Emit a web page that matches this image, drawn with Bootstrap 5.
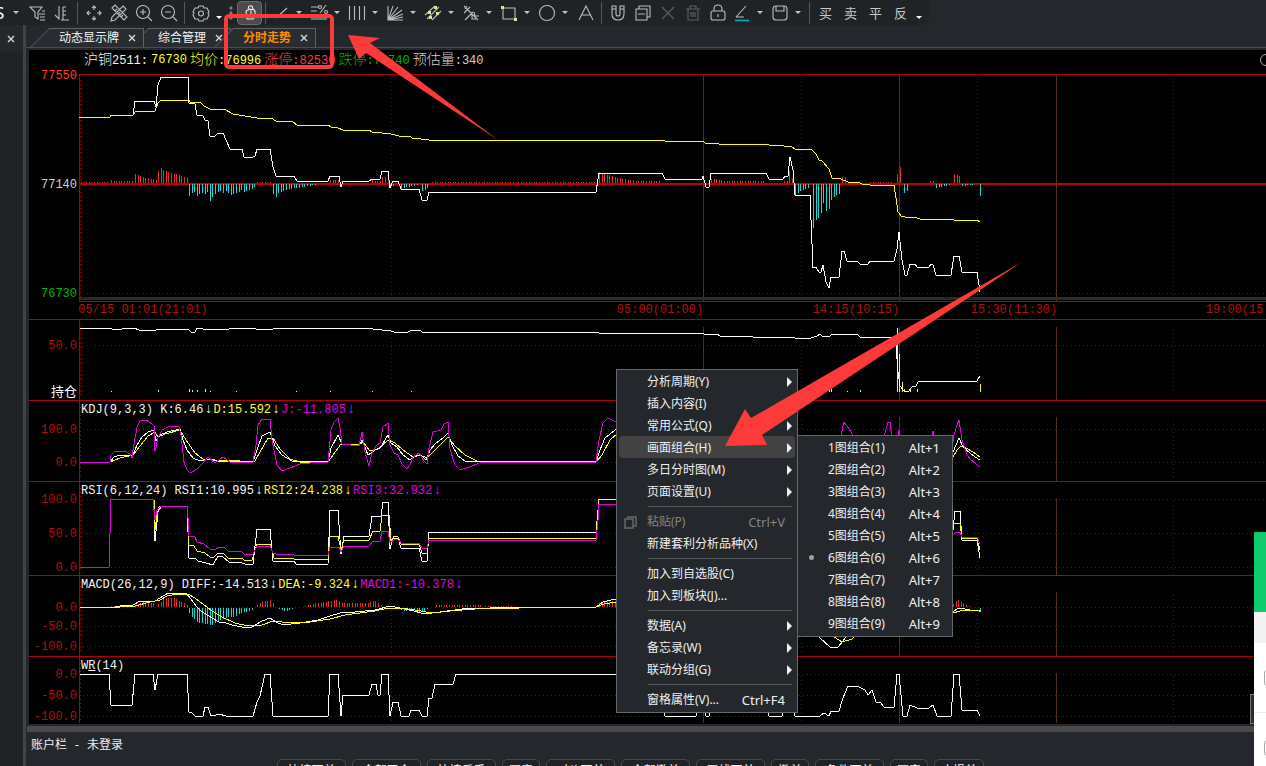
<!DOCTYPE html>
<html lang="zh-CN">
<head>
<meta charset="utf-8">
<meta name="viewport" content="width=device-width, initial-scale=1">
<title>分时走势</title>
<link rel="stylesheet" href="https://cdn.jsdelivr.net/npm/bootstrap@5.3.0/dist/css/bootstrap.min.css">
<style>
:root{--panel:#24272c;--deep:#1f2326;--line:#4a4d50;--up:#b00000;--mark:#fc3a3a}
body{background:var(--panel);color:#f0f0f0;font:12px/16px "Noto Sans","Noto Sans CJK SC",sans-serif}
button{background:none;border:0;padding:0;color:inherit;font:inherit}
/* toolbar */
.toolbar{height:25px;background:var(--deep);border-radius:0 0 6px 0;color:#c8c8c8;width:max-content;padding-right:4px}
.toolbar svg{width:20px;height:20px;fill:none;stroke:#bcbcbc;stroke-width:1.1}
.tool{width:25px;height:24px;display:flex;align-items:center;justify-content:center;flex:none}
.tool.drop{width:38px;justify-content:flex-start;padding-left:2px}
.tool.drop::after,.tool.tip::after{content:"";border:3px solid transparent;border-top-color:#c4c4c4;border-bottom:0;margin-left:5px}
.tool.tip{width:12px}
.tool.tip::after{margin:10px 0 0;border-top-color:#fff}
.tool.held{background:#4b4b4b;border:1px solid #6b6b6b;border-radius:4px}
.tool.off svg{stroke:#5d6063}
.tool.cut{width:24px;justify-content:flex-start;font-size:17px;overflow:hidden;color:#fff}
.tool.cut::before{content:"";order:2;border:3px solid transparent;border-top-color:#c4c4c4;border-bottom:0;margin-left:9px}
.tool.cut span{margin-left:-5px}
.trade{font-size:13px}
.divide{width:7px;height:22px;flex:none;background:linear-gradient(#55585a,#55585a) center/1px 100% no-repeat}
.grip{width:12px;height:16px;flex:none;background:radial-gradient(circle,#888 1px,transparent 2px) center/4px 5px repeat-y}
/* side panel and tabs */
.side{width:23px;flex:none}
.side-head{height:27px}
.side-body{background:var(--deep)}
.split-v{width:3px;flex:none;background:#434343}
.tabs{height:23px;padding:3px 0 0 24px;border-bottom:1px solid var(--line);margin-bottom:2px}
.tab-item{position:relative;background:#292c31;border:1px solid #606366;border-width:1px 1px 0 0;padding:0 4px 0 9px;gap:6px;height:19px}
.tab-item::before{content:"";position:absolute;left:-10px;top:-1px;bottom:0;width:22px;background:inherit;border:1px solid #606366;border-width:1px 0 0 1px;transform:skewX(-45deg);z-index:0}
.tab-item>*{position:relative;z-index:1}
.tab-item:nth-child(2){margin-left:5px}
.tab-item:nth-child(3){margin-left:3px;z-index:3}
.tab-item:nth-child(1){z-index:3}
.tab-item a{color:#f4f4f4;text-decoration:none}
.tab-item.on a{color:#ff8c00;font-weight:700}
.x-btn{width:14px;height:14px;display:flex;align-items:center;justify-content:center}
.x-btn svg{width:8px;height:8px;stroke:#d8d8d8;stroke-width:1.4}
/* chart panes */
.charts{background:#000;margin-left:3px;font-family:"Liberation Mono","Noto Sans CJK SC",monospace}
.pane{position:relative;min-height:0}
.pane+.pane{border-top:1px solid var(--up)}
.pane svg.plot{display:block;position:absolute;inset:0;width:100%;height:100%}
.plot text{font-size:12px;fill:#b01010}
.pane-head{position:absolute;top:1px;left:52px;white-space:pre}
.pane-head.quote{left:55px;top:2px;gap:3px}
.zh{font-size:14px;font-weight:300}
.arr{display:inline-block;width:10px;text-align:center;font-size:14px;line-height:14px}
.yl{color:#ffff28}.mg{color:#e000e0}.rd{color:#ff3c3c}.gn{color:#00b400}.wh{color:#f4f4f4}.gy{color:#d0d0d0}
/* account bar */
.split-h{height:6px;margin:2px 0 0 1px;background:#4a4848}
.account{height:34px;padding:5px 5px 0;overflow:hidden}
.acct-btn{border:1px solid #46494c;border-radius:5px;background:var(--deep);height:24px;padding:1px 6px}
.acct-btn.four{width:69px}
.acct-row{margin:6px 0 0 246px;gap:6px}
/* menus */
.ctx{position:absolute;background:var(--panel);border:1px solid #66696b;z-index:10}
.ctx-main{left:616px;top:369px;width:182px;padding:0 2px 2px}
.ctx-sub{left:797px;top:435px;width:156px;padding:0 2px 2px}
.ctx button{display:flex;align-items:center;width:100%;height:22px;padding:1px 10px 0 28px;white-space:nowrap;position:relative;border-radius:4px;text-align:left}
.ctx kbd{margin-left:auto;background:none;color:inherit;padding:0;font:13px/16px "Noto Sans",sans-serif}
.ctx .more::after{content:"";position:absolute;right:3px;border:5px solid transparent;border-left-color:#f0f0f0;border-right:0}
.ctx .hot{background:#424242}
.ctx button:disabled{color:#858585}
.ctx hr{margin:4px 3px 3px 29px;border-top:1px solid #55585a;opacity:1}
.ctx button>svg{position:absolute;left:4px;width:14px;height:14px;stroke:#64676a;fill:none}
.ctx .dot::before{content:"";position:absolute;left:9px;width:5px;height:5px;border-radius:50%;background:#a0a0a0}
/* floating window at the right edge */
.float{position:absolute;right:0;top:532px;bottom:0;width:12px;background:#fff;overflow:hidden;z-index:5}
.float-top{height:80px;background:#10cc6e}
.float-sub{height:31px;background:#f3f3f3}
.float-cell{height:70px;border-bottom:1px solid #eee;padding:27px 0 0 10px}
.float-cell span{display:block;width:16px;height:16px;border:1px solid #aaa;border-radius:3px}
.shade{position:absolute;right:12px;top:694px;width:4px;height:30px;background:#2c2c2c;border:1px solid #777;border-right:0}
.marks{position:absolute;left:0;top:0;width:100%;height:100%;pointer-events:none;z-index:20}
</style>
</head>
<body class="vh-100 overflow-hidden position-relative d-flex flex-column">

<header class="toolbar d-flex align-items-center">
  <button class="tool cut" aria-label="字号"><span>S</span></button>
  <button class="tool" aria-label="筛选"><svg viewBox="0 0 20 20"><path d="M3 4h12L11 9v7L8 14V9zM12 11h6M13 14h5M13 17h5M15 8h3"/></svg></button>
  <button class="tool" aria-label="排序"><svg viewBox="0 0 20 20"><path d="M7 3v13L3 12M11 17V4M11 4h3M11 8h3M11 12h3M9 17h8"/></svg></button>
  <span class="divide"></span>
  <button class="tool" aria-label="移动"><svg viewBox="0 0 20 20"><path d="M10 3v4M10 13v4M3 10h4M13 10h4M8 5l2-2 2 2M8 15l2 2 2-2M5 8l-2 2 2 2M15 8l2 2-2 2"/></svg></button>
  <button class="tool" aria-label="画线工具"><svg viewBox="0 0 20 20"><path d="M3 5l3-3 12 12-3 3zM14 3l3 3L6 17l-4 1 1-4zM6 8l2-2M9 11l2-2M12 14l2-2"/></svg></button>
  <button class="tool" aria-label="放大"><svg viewBox="0 0 20 20"><circle cx="9" cy="9" r="6.5"/><path d="M14 14l4 4M6 9h6M9 6v6"/></svg></button>
  <button class="tool" aria-label="缩小"><svg viewBox="0 0 20 20"><circle cx="9" cy="9" r="6.5"/><path d="M14 14l4 4M6 9h6"/></svg></button>
  <span class="divide"></span>
  <button class="tool" aria-label="设置"><svg viewBox="0 0 20 20"><path d="M8 3h4l1 2 3 0 2 4-1 1 1 2-2 4-3 0-1 2H8l-1-2-3 0-2-4 1-2-1-1 2-4 3 0z"/><circle cx="10" cy="10.500" r="2.500"/></svg></button>
  <button class="tool tip" aria-label="更多"></button>
  <span class="grip"></span>
  <button class="tool held" aria-label="光标"><svg viewBox="0 0 20 20" style="stroke:#eee"><path d="M6 8l1 8h6l2-3V8l-2-2-2 1-1-1-2 1zM8 6l1-3 3 0 1 3M11 8v3"/></svg></button>
  <span class="divide"></span>
  <button class="tool drop" aria-label="直线"><svg viewBox="0 0 20 20"><path d="M5 15L16 5"/></svg></button>
  <button class="tool drop" aria-label="百分比线"><svg viewBox="0 0 20 20"><path d="M2 4h7M2 8h6M2 12h16M2 16h16M17 2l-6 8"/><circle cx="11" cy="4" r="1.500"/><circle cx="17" cy="9" r="1.500"/></svg></button>
  <button class="tool drop" aria-label="周期线"><svg viewBox="0 0 20 20"><path d="M2.500 3v14M7.500 3v14M12.500 3v14M17.500 3v14"/></svg></button>
  <button class="tool drop" aria-label="扇形线"><svg viewBox="0 0 20 20"><path d="M3 3v14h15M3 17L8 3M3 17L13 4M3 17L17 7M3 17l15-6M3 17l15-3"/></svg></button>
  <button class="tool drop" aria-label="平行线"><svg viewBox="0 0 20 20"><path d="M2 12L12 3M4 16L16 4M9 17l9-9"/><path d="M5 8h3v3H5zM11 3h3v3h-3zM6 13h3v3H6zM13 9h3v3h-3z" fill="#e2e2a0" stroke="none"/></svg></button>
  <button class="tool drop" aria-label="音叉线"><svg viewBox="0 0 20 20"><path d="M3 3l14 14M3 10l6-6M4 17l8-8M6 3L4 6M11 12v4h4M13 9l1 4 4 0"/></svg></button>
  <button class="tool drop" aria-label="矩形"><svg viewBox="0 0 20 20"><path d="M4 5h12v11H4z"/><path d="M2 3h3v3H2zM15 15h3v3h-3z" fill="#e2e2a0" stroke="none"/></svg></button>
  <button class="tool drop" aria-label="圆形"><svg viewBox="0 0 20 20"><circle cx="10" cy="10" r="7.500"/></svg></button>
  <button class="tool" aria-label="文字"><svg viewBox="0 0 20 20"><path d="M3 17L10 3l7 14M6 12h8"/></svg></button>
  <span class="divide"></span>
  <button class="tool" aria-label="磁铁"><svg viewBox="0 0 20 20"><path d="M4 3h4v8q0 2 2 2t2-2V3h4v8q0 6-6 6t-6-6zM4 6h4M12 6h4"/></svg></button>
  <button class="tool" aria-label="复制"><svg viewBox="0 0 20 20"><path d="M3 6h11v11H3zM6 6V3h11v11h-3M5 11h7"/></svg></button>
  <button class="tool off" aria-label="关闭"><svg viewBox="0 0 20 20"><path d="M4 4l12 12M16 4L4 16"/></svg></button>
  <button class="tool off" aria-label="删除"><svg viewBox="0 0 20 20"><path d="M3 6h14M7 6V3h6v3M5 6v11h10V6M8 9v5M10 9v5M12 9v5"/></svg></button>
  <button class="tool" aria-label="锁定"><svg viewBox="0 0 20 20"><rect x="3" y="8" width="14" height="9" rx="2"/><path d="M6 8V6q0-4 4-4t4 4v2M10 11v3"/></svg></button>
  <button class="tool drop" aria-label="颜色"><svg viewBox="0 0 20 20"><path d="M4 14L14 3M4 14h8"/><path d="M3 17.500h14" stroke="#18a8c0" stroke-width="1.600"/></svg></button>
  <button class="tool drop" aria-label="保存"><svg viewBox="0 0 20 20"><rect x="3" y="3" width="14" height="14" rx="3"/><path d="M6 3v5h8V3"/></svg></button>
  <span class="divide"></span>
  <button class="tool trade">买</button><button class="tool trade">卖</button><button class="tool trade">平</button><button class="tool trade">反</button>
  <button class="tool tip" aria-label="更多"></button>
</header>

<div class="d-flex flex-fill" style="min-height:0">
  <aside class="side d-flex flex-column">
    <div class="side-head d-flex align-items-center ps-1"><button class="x-btn" aria-label="关闭"><svg viewBox="0 0 8 8"><path d="M1 1l6 6M7 1L1 7"/></svg></button></div>
    <div class="side-body flex-fill"></div>
  </aside>
  <div class="split-v"></div>
  <main class="d-flex flex-column flex-fill overflow-hidden">
    <nav class="tabs d-flex">
      <div class="tab-item d-flex align-items-center"><a href="#">动态显示牌</a><button class="x-btn" aria-label="关闭"><svg viewBox="0 0 8 8"><path d="M1 1l6 6M7 1L1 7"/></svg></button></div>
      <div class="tab-item d-flex align-items-center"><a href="#">综合管理</a><button class="x-btn" aria-label="关闭"><svg viewBox="0 0 8 8"><path d="M1 1l6 6M7 1L1 7"/></svg></button></div>
      <div class="tab-item on d-flex align-items-center"><a href="#">分时走势</a><button class="x-btn" aria-label="关闭"><svg viewBox="0 0 8 8"><path d="M1 1l6 6M7 1L1 7"/></svg></button></div>
    </nav>
    <div class="charts d-flex flex-column flex-fill overflow-hidden">
      <section class="pane" id="price"><svg class="plot"></svg>
        <div class="pane-head quote d-flex"><span class="wh"><span class="zh">沪铜</span>2511:</span><span class="yl">76730</span><span class="yl"><span class="zh">均价</span>:76996</span><span class="rd"><span class="zh">涨停</span>:82530</span><span class="gn"><span class="zh">跌停</span>:70740</span><span class="gy"><span class="zh">预估量</span>:340</span></div>
      </section>
      <section class="pane" id="hold"><svg class="plot"></svg></section>
      <section class="pane" id="kdj"><svg class="plot"></svg>
        <div class="pane-head"><span class="wh">KDJ(9,3,3) K:6.46<span class="arr">↓</span></span><span class="yl">D:15.592<span class="arr">↓</span></span><span class="mg">J:-11.805<span class="arr">↓</span></span></div></section>
      <section class="pane" id="rsi"><svg class="plot"></svg>
        <div class="pane-head"><span class="wh">RSI(6,12,24) RSI1:10.995<span class="arr">↓</span></span><span class="yl">RSI2:24.238<span class="arr">↓</span></span><span class="mg">RSI3:32.932<span class="arr">↓</span></span></div></section>
      <section class="pane" id="macd"><svg class="plot"></svg>
        <div class="pane-head"><span class="wh">MACD(26,12,9) DIFF:-14.513<span class="arr">↓</span></span><span class="yl">DEA:-9.324<span class="arr">↓</span></span><span class="mg">MACD1:-10.378<span class="arr">↓</span></span></div></section>
      <section class="pane" id="wr"><svg class="plot"></svg>
        <div class="pane-head wh">W<u>R</u>(14)</div></section>
    </div>
    <div class="split-h"></div>
    <footer class="account">
      <div class="d-flex gap-2"><span>账户栏</span><span>-</span><span>未登录</span></div>
      <div class="acct-row d-flex">
        <button class="acct-btn four">快捷下单</button><button class="acct-btn four">全部平仓</button><button class="acct-btn four">快捷反手</button><button class="acct-btn">图表</button><button class="acct-btn four">对价下单</button><button class="acct-btn four">全部撤单</button><button class="acct-btn four">画线下单</button><button class="acct-btn">撤单</button><button class="acct-btn four">条件下单</button><button class="acct-btn">图表</button><button class="acct-btn">止损单</button>
      </div>
    </footer>
  </main>
</div>

<div class="ctx ctx-main">
  <button class="more">分析周期(Y)</button><button>插入内容(I)</button><button class="more">常用公式(Q)</button><button class="more hot">画面组合(H)</button><button class="more">多日分时图(M)</button><button class="more">页面设置(U)</button>
  <hr>
  <button disabled><svg viewBox="0 0 14 14" stroke-width="1.500"><path d="M2 4h8v9H2zM5 4V2h8v9h-3"/></svg>粘贴(P)<kbd>Ctrl+V</kbd></button><button>新建套利分析品种(X)</button>
  <hr>
  <button>加入到自选股(C)</button><button>加入到板块(J)...</button>
  <hr>
  <button class="more">数据(A)</button><button class="more">备忘录(W)</button><button class="more">联动分组(G)</button>
  <hr>
  <button>窗格属性(V)...<kbd>Ctrl+F4</kbd></button>
</div>
<div class="ctx ctx-sub">
  <button>1图组合(1)<kbd>Alt+1</kbd></button><button>2图组合(2)<kbd>Alt+2</kbd></button><button>3图组合(3)<kbd>Alt+3</kbd></button><button>4图组合(4)<kbd>Alt+4</kbd></button><button>5图组合(5)<kbd>Alt+5</kbd></button><button class="dot">6图组合(6)<kbd>Alt+6</kbd></button><button>7图组合(7)<kbd>Alt+7</kbd></button><button>8图组合(8)<kbd>Alt+8</kbd></button><button>9图组合(9)<kbd>Alt+9</kbd></button>
</div>

<div class="shade"></div>
<div class="float"><div class="float-top"></div><div class="float-sub"></div><div class="float-cell"><span></span></div><div class="float-cell"><span></span></div></div>

<svg class="marks">
  <rect x="226" y="16" width="106" height="51" rx="3" fill="none" stroke="#fc3a3a" stroke-width="4"/>
  <path fill="#fc3a3a" d="M348 35L380 38L370 43L498 140L366 53L359 59zM725 446L745 409L751 418L1022 262L762 435L767 445z"/>
</svg>

<script src="https://cdn.jsdelivr.net/npm/bootstrap@5.3.0/dist/js/bootstrap.bundle.min.js"></script>
<script>
// Points are in window coordinates; every pane shifts them to its own origin.
const W='#fff',Y='#ffff00',M='#e000e0',R='#e03030',C='#18d8d8';
const series=(c,p)=>`<polyline points="${p}" fill="none" stroke="${c}" shape-rendering="crispEdges"/>`;
const seg=(x1,y1,x2,y2,c,d)=>`<path d="M${x1} ${y1}L${x2} ${y2}" stroke="${c}" shape-rendering="crispEdges"${d?` stroke-dasharray="${d}"`:''}/>`;
const bars=(base,sets)=>sets.map(([x,...h])=>h.map((v,i)=>{
  const px=Math.round(x+i*2.61);
  return v?`<rect x="${px}" y="${v>0?base-v:base+1}" width="1" height="${Math.abs(v)}" fill="${v>0?R:C}"/>`:'';
}).join('')).join('');
const rep=(v,n)=>Array(n).fill(v);
const label=(y,t,c)=>`<text x="77" y="${y+4}" text-anchor="end"${c?` style="fill:${c}"`:''}>${t}</text>`;

function grid(top,bottom,plotTop,rows){
  let s='';
  [391,801,977,1173].forEach(x=>s+=seg(x+.5,plotTop+3,x+.5,bottom-2,'#900000','1 3'));
  [703,899,1056].forEach(x=>s+=seg(x+.5,plotTop,x+.5,bottom,'#542e1e'));
  rows.forEach(y=>s+=seg(83,y+.5,2600,y+.5,'#900000','1 3'));
  return s+seg(79.5,top,79.5,bottom,'#b00000')+seg(80.5,top+6,80.5,bottom-3,'#b00000','1 3');
}
const panes={
 price:[50,269,()=>grid(74,301,75,[293])+seg(80,298,2600,298,'#2a2a2a').replace('/>',' stroke-width="3"/>')+seg(79,301.5,2600,301.5,'#542e1e')
  +seg(79,74.5,2600,74.5,'#b00000')+seg(79,184,2600,184,'#c00000').replace('/>',' stroke-width="2"/>')
  +bars(183,[[81,...rep(1,11)],[111,3,2,2,2,2,2,2,2,2],[135,9,8,7,6,5,5,4,4,3],[158,12,15,13,12,11,10,9,9,8,7,6,5],
   [189,-12,-9,-8,-12,-10,-9,-10,-8,-17,-13,-10,-8,-7,-9,-7,-9,-11,-10,-9,-8,-6,-8,-7,-6,-5,-3],[257,...rep(1,6)],[273,-10,-13,-9,-8,-7,-6,-5,-5,-4,-4,-4,-3,-3,-2,-2,-1,-1],
   [330,3,3,3,3],[372,3,2,2,2,6,6,5],[390,-4,-2],[401,-5,-4,-3,-3,-2,-2,-1],[422,-7,-6,-4],[432,...rep(1,63)],
   [599,11,10,10,8,8,7,6,5,5,4,4,3,3,3,...rep(2,10)],[711,4,4,4,3,3,...rep(2,16)],[784,2,2,12,4],[795,-11,-9,-7,-6,-5,-4],[813,-44,-36,-34,-29,-19,-27,-25,-16,-13,-11,-10],
   [842,6,6],[870,...rep(1,9)],[897,9,16],[904,-9,-7],[930,2,2],[936,-4,-3,-3,-2,-2,-1],[954,9,8,7],[962,-2,-2,-1,-1,-1],[980,-12]])
  +series(W,'79,117 110,117 111,115 133,115 135,101 154,101 156,107 158,85 161,77 188,77 189,103 195,104 197,115 203,116 205,120 208,121 210,136 215,136 218,133 223,133 226,140 230,149 242,149 244,157 253,157 255,156 257,149 270,149 273,167 276,176 294,176 297,181 328,181 330,176 339,176 341,187 343,181 369,181 372,179 380,179 382,171 388,171 390,188 393,181 398,181 401,189 419,189 422,200 427,200 429,192 596,192 599,173 662,173 665,179 702,179 703,176 706,187 709,187 711,173 766,173 769,179 783,179 785,176 788,176 790,157 793,170 795,195 810,195 813,268 816,267 819,272 821,272 823,265 826,282 829,288 831,277 839,277 842,251 844,251 847,261 857,261 860,264 868,264 870,261 894,261 897,249 899,232 902,260 905,275 907,275 910,264 915,264 917,267 929,267 931,264 933,265 936,275 951,275 954,256 959,256 962,272 977,272 980,292')
  +series(Y,'79,117 110,117 111,115 133,115 135,112 155,111 158,103 161,100 189,100 190,102 201,103 204,106 210,109 224,109 233,114 245,116 257,118 271,118 276,121 293,122 297,125 328,125 331,127 338,128 343,130 369,130 372,132 391,134 399,136 410,136 412,138 421,139 429,140 663,140 665,141 703,141 705,143 719,144 767,144 769,145 784,146 792,147 795,149 811,149 816,154 819,160 822,161 829,169 832,178 841,179 848,182 858,182 862,184 870,185 894,185 896,198 898,212 901,216 905,217 917,218 920,219 952,219 954,220 977,220 980,222')
  +label(75,'77550','#ff3c3c')+label(184,'77140','#d0d0d0')+label(293,'76730','#00b400')
  +[[143,'05/15 01:01(21:01)'],[660,'05:00(01:00)'],[856,'14:15(10:15)'],[1014,'15:30(11:30)'],[1249,'19:00(15:00)']].map(([x,t])=>`<text x="${x}" y="313" text-anchor="middle">${t}</text>`).join('')
  +'<circle cx="1266" cy="60" r="5.500" fill="none" stroke="#aaa"/>'],
 hold:[320,81,()=>grid(320,400,327,[345])
  +[[111,1],[158,2],[189,3],[192,2],[197,2],[205,3],[210,1],[236,1],[296,1],[330,1],[372,1],[411,1],[829,3],[831,3],[847,1],[860,2],[897,64],[899,38],[902,10],[904,3],[910,2],[917,3],[980,8]].map(([x,h])=>`<rect x="${x}" y="${392-h}" width="1" height="${h}" fill="#ffff00"/>`).join('')
  +series(W,'80,328 110,328 112,329 122,329 124,328 134,328 139,330 156,330 158,329 188,329 191,332 195,332 197,328 203,329 229,329 231,328 253,328 256,329 273,329 276,328 370,328 373,329 382,330 391,331 394,332 408,332 412,330 420,330 422,332 597,332 599,333 702,333 704,334 717,334 720,336 751,336 753,337 783,337 785,338 790,337 795,338 811,338 817,336 820,334 823,337 830,336 832,334 857,334 860,337 894,337 896,345 898,372 900,386 904,391 909,391 912,387 916,386 918,382 929,381 977,381 980,376')
  +label(345,'50.0')+'<text x="77" y="396" text-anchor="end" style="fill:#fff;font-size:13px">持仓</text>'],
 kdj:[401,81,()=>grid(401,481,417,[429,462])
  +series(Y,'80,462 110,462 120,458 133,455 140,446 148,436 155,432 158,437 165,434 180,430 186,440 195,453 203,459 215,460 240,461 255,461 260,452 268,438 273,438 280,449 290,459 300,462 328,462 333,455 341,444 359,445 363,442 370,451 378,449 388,440 395,443 403,450 413,457 420,455 427,458 437,448 448,437 455,446 465,455 477,461 596,462 602,455 610,440 617,434 620,433 700,462 953,457 957,450 961,446 966,448 973,452 980,457')
  +series(W,'80,462 110,462 114,457 120,455 133,455 137,445 142,437 148,432 154,430 156,441 160,435 167,432 180,429 183,440 187,450 193,458 200,461 208,459 218,461 240,462 253,462 257,450 262,436 270,432 275,446 282,455 292,461 328,462 331,448 338,435 342,444 359,446 362,440 368,455 375,450 380,448 388,435 391,443 397,447 403,455 410,460 415,456 421,455 426,460 430,450 436,443 443,438 448,433 452,445 458,456 465,461 487,462 596,462 600,450 605,438 615,430 620,428 700,462 953,452 956,445 959,438 963,447 970,453 975,457 980,460')
  +series(M,'80,462 110,462 111,455 115,451 125,451 130,454 132,458 133,450 137,427 140,421 146,420 152,424 154,426 155,451 158,438 162,430 170,426 179,427 181,435 184,462 187,470 190,473 197,469 203,463 208,457 215,463 223,457 230,462 253,462 256,445 258,425 262,419 270,419 272,440 277,465 282,471 290,468 300,464 310,463 328,462 331,430 334,422 338,418 340,428 342,444 359,446 362,432 365,452 369,466 372,453 376,446 380,443 383,427 388,423 390,445 394,453 398,455 402,464 407,469 410,465 413,457 419,453 424,461 427,464 429,448 433,432 441,430 444,424 448,422 450,449 455,465 460,470 470,467 479,463 490,462 596,462 599,440 603,423 608,418 614,421 620,424 700,462 838,462 841,435 844,422 849,429 856,440 884,437 888,422 890,422 892,440 897,440 899,430 901,440 932,440 933,431 935,450 952,450 954,435 957,425 959,420 962,440 967,455 971,460 975,463 978,466 980,466')
  +label(429,'100.0')+label(462,'0.0')],
 rsi:[482,94,()=>grid(482,575,498,[499,533,567])
  +series(W,'154,502 155,541 158,512 161,507 187,506 189,558 196,559 198,561 206,563 213,565 218,556 222,556 229,562 242,563 245,564 253,564 257,529 270,529 273,561 294,561 296,564 328,564 330,510 338,510 341,554 344,536 369,536 372,516 381,516 383,502 388,502 390,549 393,538 398,538 401,548 419,548 422,561 427,561 429,532 596,532 599,499 620,499 700,560 953,530 955,511 960,511 962,540 977,540 980,558')
  +series(Y,'154,500 155,530 157,515 159,507 187,506 189,545 194,546 197,551 205,553 210,557 214,557 218,553 224,554 228,558 242,558 244,560 252,560 257,544 270,544 274,558 294,559 328,559 330,536 338,536 341,550 344,540 369,540 373,531 380,531 382,515 389,515 391,541 394,536 398,537 401,544 419,544 422,553 427,553 429,538 596,538 599,499 620,499 700,560 953,530 954,523 960,523 962,538 977,539 980,550')
  +series(M,'80,567 109,567 111,499 153,499 155,520 157,510 160,507 187,506 188,518 189,536 195,537 197,542 204,544 210,549 216,549 219,547 224,547 228,551 242,552 245,555 253,554 257,546 270,546 273,553 276,554 294,555 328,555 330,547 339,547 341,552 344,546 369,546 373,541 380,541 382,531 388,531 390,543 395,539 398,540 402,543 419,543 422,548 427,548 429,540 596,540 598,520 599,504 620,504 700,550 953,535 956,532 960,532 962,537 977,537 980,544')
  +label(499,'100.0')+label(533,'50.0')+label(567,'0.0')],
 macd:[576,81,()=>grid(576,656,592,[607,626,646])
  +bars(607,[[111,1,1,1,1,1,1,1,1,2],[135,2,3,4,5,5,5,4,4],[158,3,5,8,9,9,9,9,8,6,5,4,2],[189,-5,-9,-11,-14,-15,-15,-16,-16,-17,-17,-15,-14,-12,-11,-10,-9,-9,-9,-8,-6,-5,-4,-4,-3,-2],
   [257,2,4,5,6,6,7,4],[279,-1,-2,-3,-3,-2,-1],[305,1,2,2,3,4,4,4,5,5,6,6,7,7,6,...rep(4,11),5,6,6,4,2],[401,-2,-3,-3,-3,-2,-2,-3,-4,-4,-3,-1],[436,...rep(2,18)],[485,...rep(1,12)],[599,4,5,6,7,7,6,6,5],[953,3,6,7,5,4,2,1],[980,-4]])
  +series(W,'80,607 115,607 120,606 133,605 140,601 155,601 160,598 168,593 186,593 191,599 196,606 201,611 212,618 219,622 226,623 232,625 242,627 252,627 257,624 262,621 270,618 276,622 283,625 300,623 318,620 330,616 340,613 355,612 375,610 390,606 400,608 410,610 425,614 440,612 470,608 490,608 520,607 596,607 603,602 615,599 620,599 790,607 815,632 820,638 830,647 838,647 843,641 850,630 953,612 958,608 965,609 970,610 979,611 980,612')
  +series(Y,'80,607 120,607 135,606 150,602 160,600 167,596 178,594 188,594 195,598 203,604 212,611 222,617 235,623 248,626 262,625 273,621 290,623 310,622 330,619 345,615 360,613 375,611 388,608 400,608 415,610 432,613 450,611 475,609 520,608 596,607 604,604 616,602 620,602 790,607 828,633 842,642 852,639 860,630 953,613 960,611 967,610 980,611')
  +label(607,'0.0')+label(626,'-50.0')+label(646,'-100.0')],
 wr:[657,68,()=>grid(657,723,673,[674,695,716])
  +series(W,'80,674 109,674 111,705 132,705 135,674 153,674 155,690 158,674 187,674 189,712 192,713 195,716 203,716 205,707 208,707 211,716 216,715 219,714 226,716 253,716 257,702 260,696 265,674 270,674 273,716 328,716 330,674 338,674 341,716 343,695 369,695 372,684 376,684 378,695 380,695 382,674 388,674 390,716 393,702 398,702 401,716 409,716 411,710 419,710 422,716 427,716 429,698 432,698 435,684 453,684 456,674 662,674 665,716 696,716 698,674 703,674 706,716 709,716 711,674 767,674 769,716 782,716 784,674 793,674 795,716 820,716 824,713 829,716 831,711 839,711 843,698 848,686 857,686 865,690 868,695 872,690 876,702 881,703 884,707 894,707 897,674 899,674 903,716 907,716 910,705 917,708 929,708 933,705 937,716 951,716 954,674 959,674 962,710 977,710 980,716')
  +label(674,'0.0')+label(695,'-50.0')+label(716,'-100.0')]
};
for(const [id,[top,weight,draw]] of Object.entries(panes)){
  const el=document.getElementById(id);
  el.style.flex=`${weight} ${weight} ${weight}px`;
  el.querySelector('svg').innerHTML=`<g transform="translate(-29,${-top})">${draw()}</g>`;
}
</script>
</body>
</html>
